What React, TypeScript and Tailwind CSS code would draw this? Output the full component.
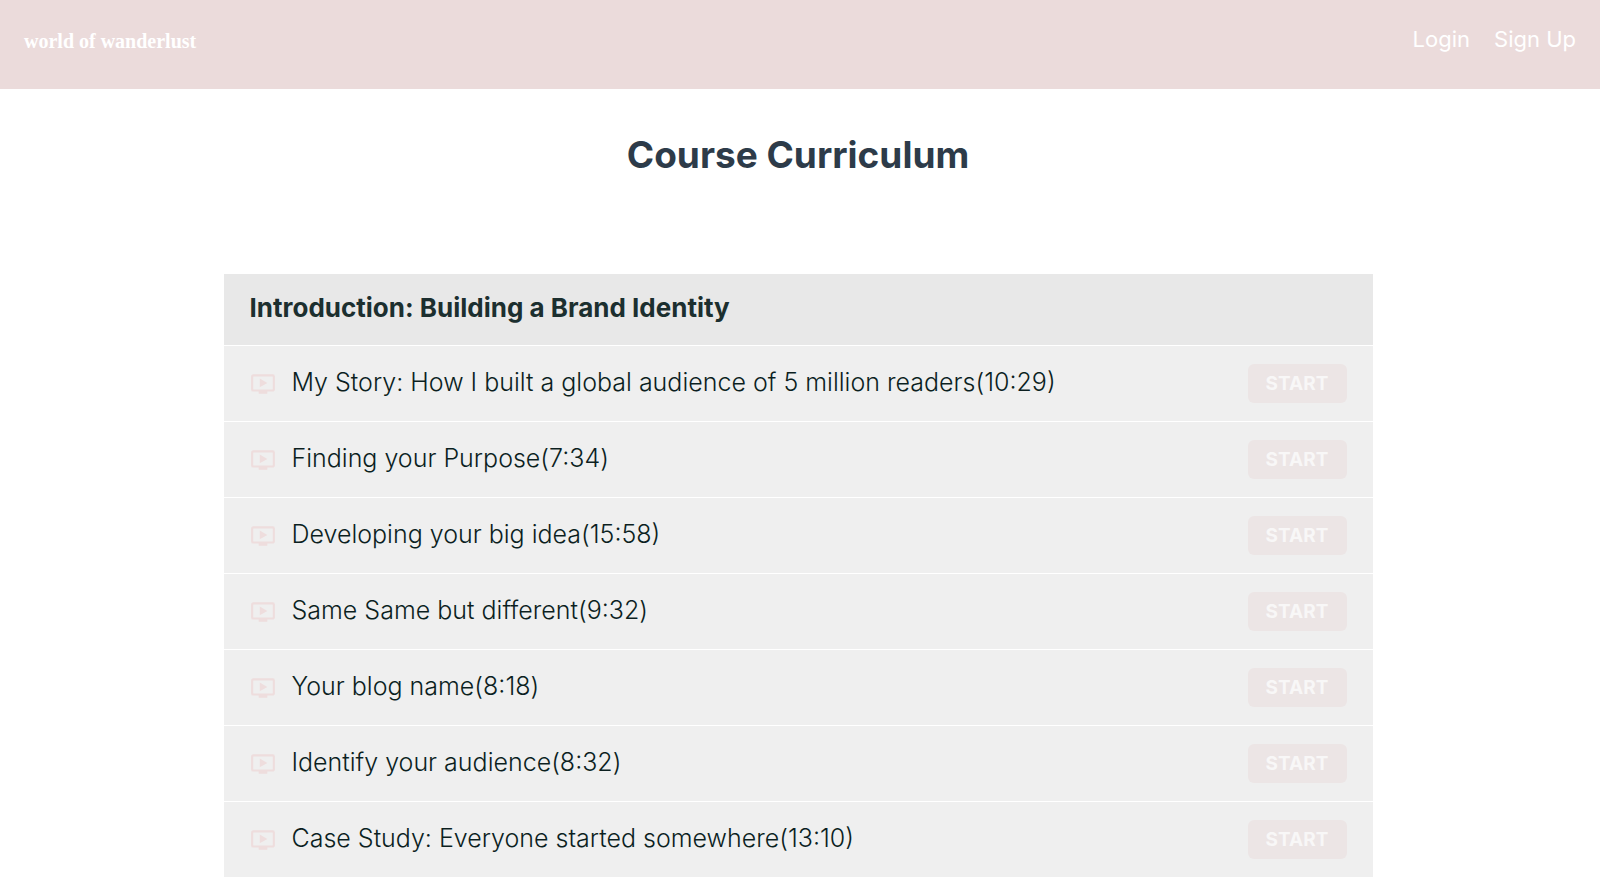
import { MdOndemandVideo } from "react-icons/md";

const lessons = [
  { title: "My Story: How I built a global audience of 5 million readers", duration: "10:29" },
  { title: "Finding your Purpose", duration: "7:34" },
  { title: "Developing your big idea", duration: "15:58" },
  { title: "Same Same but different", duration: "9:32" },
  { title: "Your blog name", duration: "8:18" },
  { title: "Identify your audience", duration: "8:32" },
  { title: "Case Study: Everyone started somewhere", duration: "13:10" },
];

export default function App() {
  return (
    <div className="min-h-screen bg-white font-['Inter',sans-serif]">
      <Header />

      <main className="pt-[46px] pr-7 pb-3 pl-6">
        <h1 className="text-center text-[37px] leading-10 font-bold text-[#2d3b49]">
          Course Curriculum
        </h1>

        <Curriculum />
      </main>
    </div>
  );
}

function Header() {
  return (
    <header className="flex h-[89px] items-start justify-between bg-[#ebdbdb] px-6 text-white">
      <a
        href="#"
        className="pt-[27px] font-['Liberation_Serif',serif] text-[20px] leading-7 font-bold"
      >
        world of wanderlust
      </a>

      <nav className="flex gap-6 pt-[23px] text-[22px] leading-8">
        <a href="#login">Login</a>
        <a href="#signup">Sign Up</a>
      </nav>
    </header>
  );
}

function Curriculum() {
  return (
    <section className="mx-auto mt-[99px] max-w-[1149px]">
      <h2 className="bg-[#e8e8e8] px-[26px] pt-[18px] pb-[21px] text-[26px] leading-8 font-bold text-[#1c2f2f]">
        Introduction: Building a Brand Identity
      </h2>

      <ul>
        {lessons.map((lesson) => (
          <li
            key={lesson.title}
            className="flex h-[76px] items-center border-t border-white bg-[#efefef] px-[26px]"
          >
            <MdOndemandVideo className="size-[26px] shrink-0 text-[#eedddd]" />

            <a
              href="#lesson"
              className="ml-4 flex-1 pb-1 text-[25px] leading-8 font-[350] text-[#0c1f1f]"
            >
              {lesson.title}({lesson.duration})
            </a>

            <button
              type="button"
              className="h-[39px] w-[99px] shrink-0 rounded-md bg-[#ece5e5] pt-0.5 text-[19px] font-bold text-[#f8f7f7]"
            >
              START
            </button>
          </li>
        ))}
      </ul>
    </section>
  );
}
